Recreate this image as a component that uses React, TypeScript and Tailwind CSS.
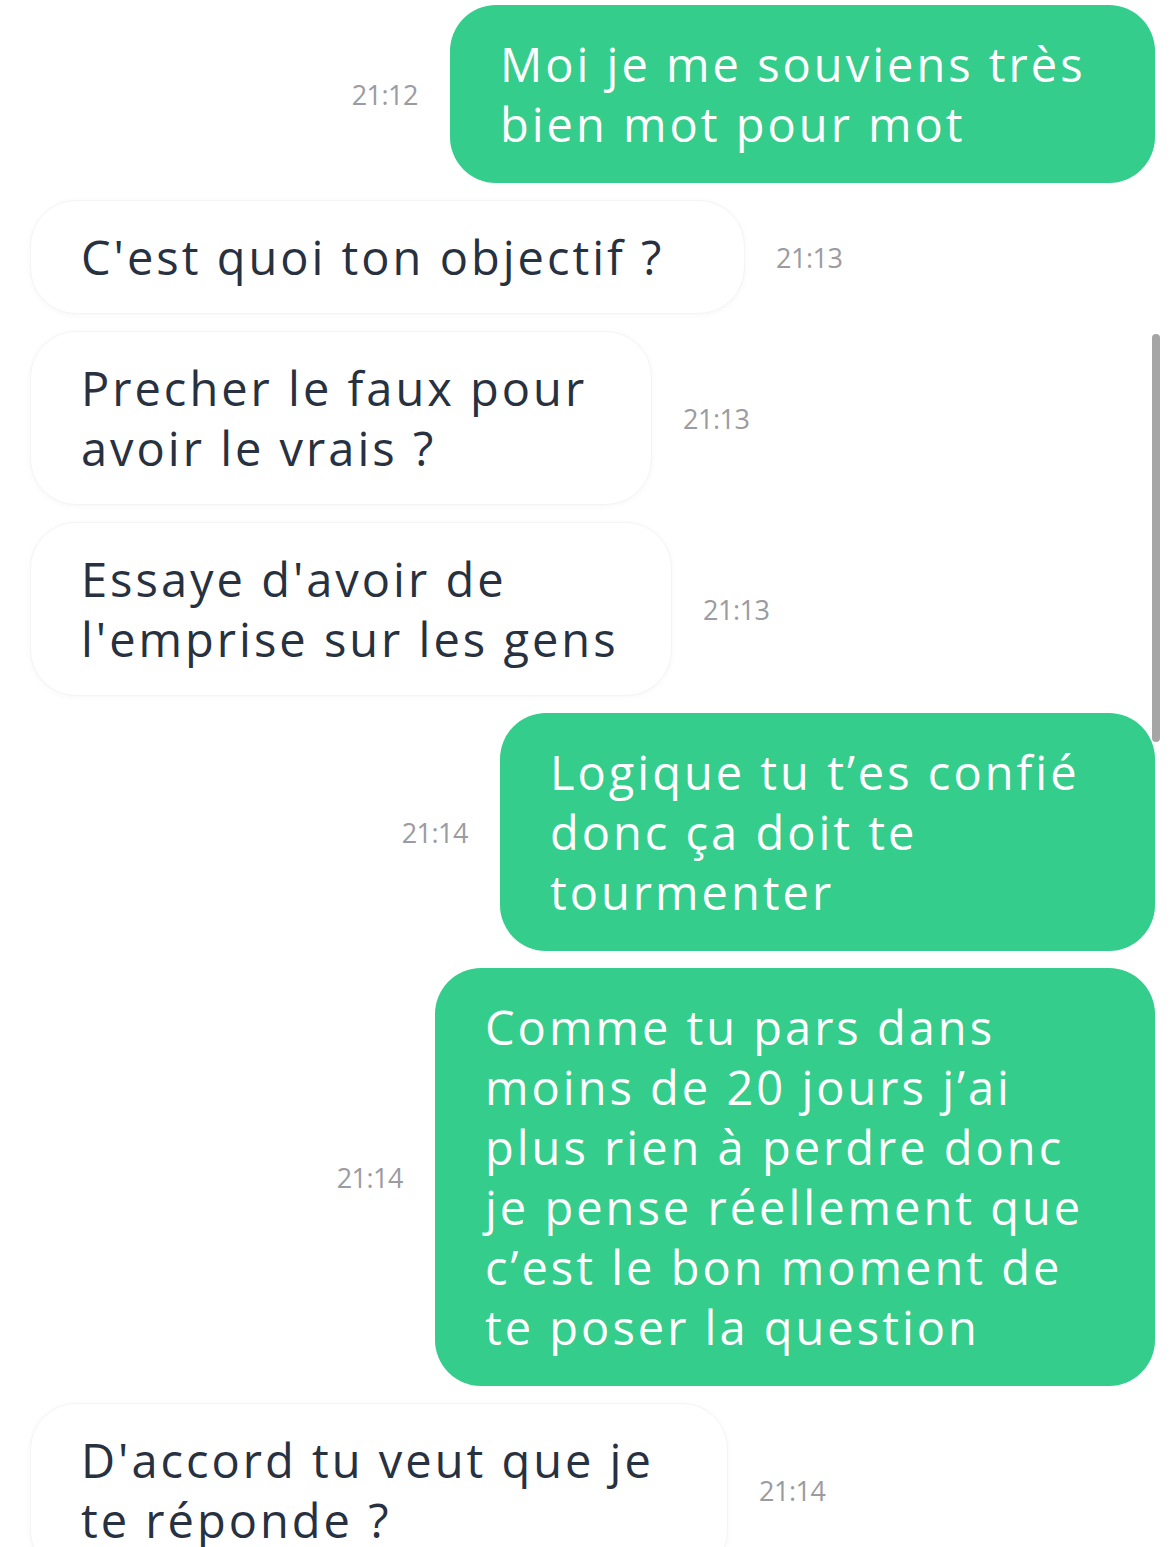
import React from "react";

type Message = {
  id: number;
  mine: boolean;
  time: string;
  width: string;
  lines: string[];
};

const MESSAGES: Message[] = [
  {
    id: 1,
    mine: true,
    time: "21:12",
    width: "w-[705px]",
    lines: ["Moi je me souviens très", "bien mot pour mot"],
  },
  {
    id: 2,
    mine: false,
    time: "21:13",
    width: "w-[715px]",
    lines: ["C'est quoi ton objectif ?"],
  },
  {
    id: 3,
    mine: false,
    time: "21:13",
    width: "w-[622px]",
    lines: ["Precher le faux pour", "avoir le vrais ?"],
  },
  {
    id: 4,
    mine: false,
    time: "21:13",
    width: "w-[642px]",
    lines: ["Essaye d'avoir de", "l'emprise sur les gens"],
  },
  {
    id: 5,
    mine: true,
    time: "21:14",
    width: "w-[655px]",
    lines: ["Logique tu t’es confié", "donc ça doit te", "tourmenter"],
  },
  {
    id: 6,
    mine: true,
    time: "21:14",
    width: "w-[720px]",
    lines: [
      "Comme tu pars dans",
      "moins de 20 jours j’ai",
      "plus rien à perdre donc",
      "je pense réellement que",
      "c’est le bon moment de",
      "te poser la question",
    ],
  },
  {
    id: 7,
    mine: false,
    time: "21:14",
    width: "w-[698px]",
    lines: ["D'accord tu veut que je", "te réponde ?"],
  },
];

function Time({ value }: { value: string }) {
  return (
    <span className="shrink-0 text-[27px] leading-none tracking-[-0.5px] text-[#9b9ba1]">
      {value}
    </span>
  );
}

function Bubble({ msg }: { msg: Message }) {
  const bubble = msg.mine
    ? "bg-[#34cd8b] text-white py-[29px]"
    : "bg-white text-[#27313f] py-[26px] border border-[#f4f4f5] shadow-[0_1px_6px_rgba(0,0,0,0.035)]";

  return (
    <div
      className={`${msg.width} ${bubble} rounded-[46px] px-[50px] text-[47px] leading-[60px] tracking-[3px] whitespace-nowrap`}
    >
      {msg.lines.map((line, i) => (
        <span key={i} className="block">
          {line}
        </span>
      ))}
    </div>
  );
}

export default function App() {
  return (
    <div
      className="relative h-[1547px] w-[1170px] overflow-hidden bg-white"
      style={{ fontFamily: '"Open Sans", "Noto Sans", sans-serif' }}
    >
      <div className="flex flex-col gap-[17px] pl-[30px] pr-[15px] pt-[5px]">
        {MESSAGES.map((msg) =>
          msg.mine ? (
            <div key={msg.id} className="flex items-center justify-end gap-[32px]">
              <Time value={msg.time} />
              <Bubble msg={msg} />
            </div>
          ) : (
            <div key={msg.id} className="flex items-center justify-start gap-[31px]">
              <Bubble msg={msg} />
              <Time value={msg.time} />
            </div>
          )
        )}
      </div>

      {/* scroll indicator */}
      <div className="absolute right-[10px] top-[334px] h-[408px] w-[8px] rounded-full bg-[#a5a5a5]" />
    </div>
  );
}
